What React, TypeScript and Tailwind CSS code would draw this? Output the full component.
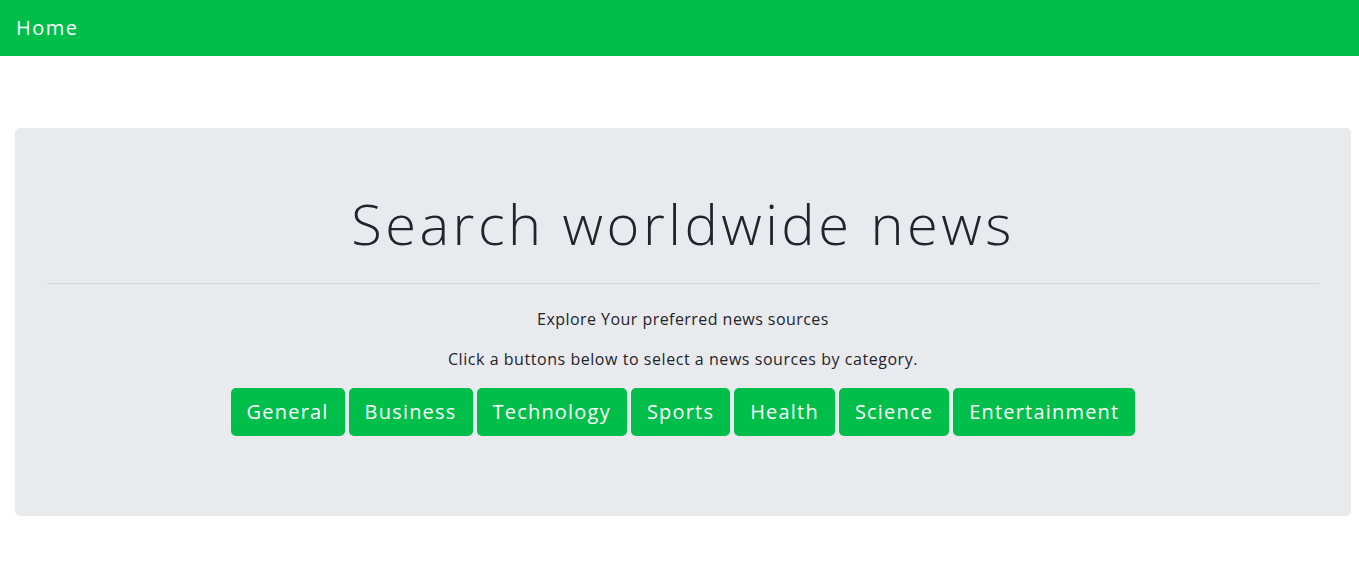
import React from "react";

const cats = ["General", "Business", "Technology", "Sports", "Health", "Science", "Entertainment"];

export default function App() {
  return (
    <div className="min-h-[570px] bg-white text-[#212529]" style={{ fontFamily: "'Open Sans', 'Noto Sans', sans-serif" }}>
      <nav className="h-[56px] bg-[#00be4a] flex items-center px-4">
        <span className="text-[20px] tracking-[1.5px] text-white">Home</span>
      </nav>
      <div className="mt-[72px] ml-[15px] w-[1336px] h-[388px] rounded-[5px] bg-[#e9eaee] px-8 pt-[62px]">
        <h1 className="text-center text-[56px] font-light leading-[67px] tracking-[3.5px]">Search worldwide news</h1>
        <hr className="mt-[26px] border-t border-[#d3d4d8]" />
        <p className="mt-[23px] text-center text-[16px] leading-[24px] tracking-[0.45px]">Explore Your preferred news sources</p>
        <p className="mt-[16px] text-center text-[16px] leading-[24px] tracking-[0.55px]">Click a buttons below to select a news sources by category.</p>
        <div className="mt-[17px] flex justify-center gap-[4px]">
          {cats.map((c) => (
            <button key={c} className="h-[48px] rounded-[5px] bg-[#00be4a] px-4 text-[20px] tracking-[1.2px] text-white">
              {c}
            </button>
          ))}
        </div>
      </div>
    </div>
  );
}
